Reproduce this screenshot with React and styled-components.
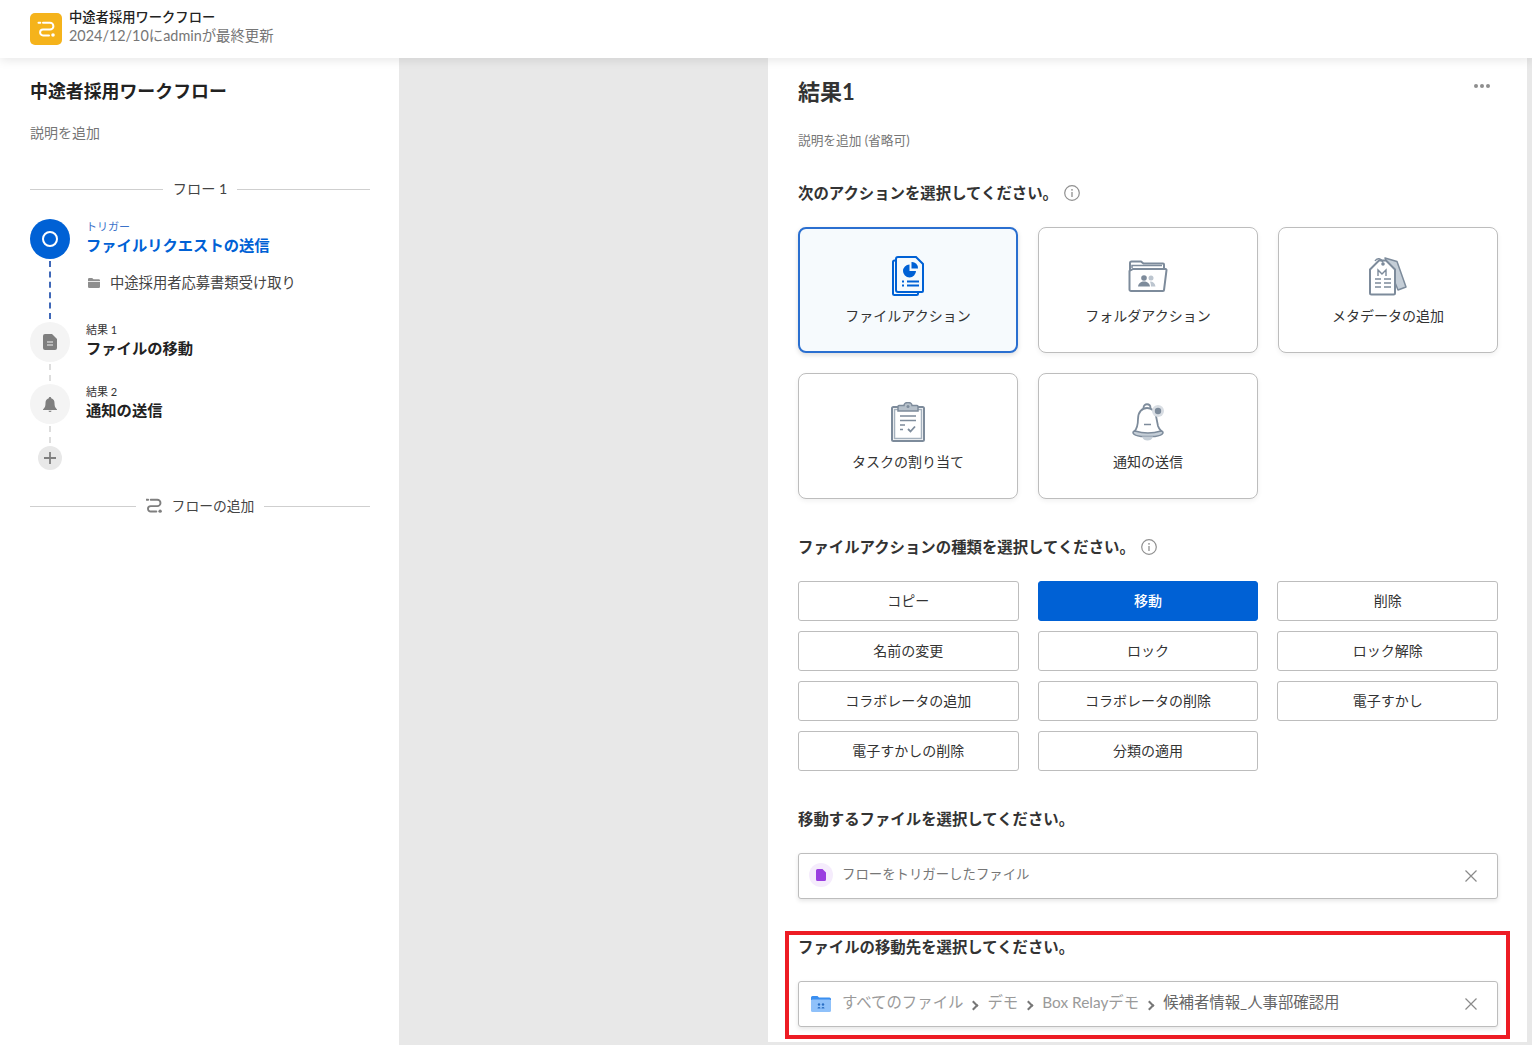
import styled, { createGlobalStyle } from "styled-components";

const GlobalStyle = createGlobalStyle`
    * { box-sizing: border-box; }
    html, body { margin: 0; padding: 0; height: 100%; }
    body {
        font-family: "Lato", "Noto Sans CJK JP", sans-serif;
        color: #222222;
        background: #e8e8e8;
        overflow: hidden;
    }
`;

const GRAY = "#7d8b9b";

function RelayIcon({ color = "#ffffff", size = 32, box = "0 0 32 32" }) {
    return (
        <svg width={size} height={size} viewBox={box} fill="none">
            <path d="M8.500 9.800h1.800M13 9.800h7a3.400 3.400 0 0 1 0 6.800h-7a2.800 2.800 0 0 0 0 5.800h6" stroke={color} strokeWidth="2" strokeLinecap="round" />
            <circle cx="23" cy="22" r="1.800" fill={color} />
        </svg>
    );
}

function FileActionIcon() {
    return (
        <svg width="32" height="40" viewBox="0 0 32 40" fill="none">
            <path d="M3 4.500H2.500A1.500 1.500 0 0 0 1 6v31.500A1.500 1.500 0 0 0 2.500 39h22a1.500 1.500 0 0 0 1.500-1.500V37" stroke="#0061d5" strokeWidth="2" />
            <path d="M6 1h18l7 7v27a1 1 0 0 1-1 1H6a2 2 0 0 1-2-2V3a2 2 0 0 1 2-2z" fill="#f6fafd" stroke="#0061d5" strokeWidth="2" />
            <path d="M17.500 8.500a6.500 6.500 0 1 0 6.500 6.500h-6.500z" fill="#0061d5" />
            <path d="M19.500 6a6 6 0 0 1 6.500 6.500h-6.500z" fill="#0061d5" />
            <path d="M10 25.500h2M15 25.500h12M10 29.500h2M15 29.500h12" stroke="#0061d5" strokeWidth="1.800" />
        </svg>
    );
}

function FolderActionIcon() {
    return (
        <svg width="40" height="32" viewBox="0 0 40 32" fill="none">
            <path d="M2 28V3a1.500 1.500 0 0 1 1.500-1.500H13l2.500 2H35a1 1 0 0 1 1 1V8" stroke={GRAY} strokeWidth="2" />
            <path d="M4 8V5.500h30" stroke={GRAY} strokeWidth="1.500" />
            <path d="M5 9h32.500a1 1 0 0 1 1 1.200L36 30a1 1 0 0 1-1 1H3a1.500 1.500 0 0 1-1.500-1.500V11z" fill="#ffffff" stroke={GRAY} strokeWidth="2" />
            <circle cx="16" cy="18" r="2.800" fill={GRAY} />
            <path d="M10 26.500c.5-3.500 3-5 6-5s5.500 1.500 6 5z" fill={GRAY} />
            <circle cx="23" cy="18" r="2.500" fill="#bcc5cf" />
            <path d="M22 21.500c3 0 5 1.500 5.500 5H23c0-2-.5-3.500-1-5z" fill="#bcc5cf" />
        </svg>
    );
}

function MetadataIcon() {
    return (
        <svg width="38" height="40" viewBox="0 0 38 40" fill="none">
            <path d="M16 2l12 3.500L37 31l-8 3z" fill="#c5ced7" stroke={GRAY} strokeWidth="1.500" strokeLinejoin="round" />
            <path d="M1 13.500L10 4.500h7l9 9V37a1.500 1.500 0 0 1-1.500 1.500h-22A1.500 1.500 0 0 1 1 37z" fill="#ffffff" stroke={GRAY} strokeWidth="2" strokeLinejoin="round" />
            <path d="M6 5c2-3.500 6-3 8 1.500" stroke={GRAY} strokeWidth="1.500" />
            <circle cx="14" cy="8" r="1.800" fill={GRAY} />
            <path d="M9 20v-6l4 4 4-4v6" stroke={GRAY} strokeWidth="1.400" />
            <path d="M6 23h6M15 23h7M6 27h6M15 27h7M6 31h6M15 31h7" stroke={GRAY} strokeWidth="1.500" />
        </svg>
    );
}

function TaskIcon() {
    return (
        <svg width="34" height="40" viewBox="0 0 34 40" fill="none">
            <rect x="1" y="5" width="32" height="34" rx="1.500" fill="#ffffff" stroke={GRAY} strokeWidth="2" />
            <rect x="3.500" y="7.500" width="27" height="29" fill="#ffffff" stroke="#a5b1bd" strokeWidth="1.500" />
            <path d="M8 3.500h5a4 3 0 0 1 8 0h5a1 1 0 0 1 1 1V9H7V4.500a1 1 0 0 1 1-1z" fill="#b6c0ca" stroke={GRAY} strokeWidth="1.500" />
            <circle cx="17" cy="4.500" r="1.500" fill={GRAY} />
            <path d="M9 14h16M9 18.500h16M9 23h5M9 27.500h3" stroke={GRAY} strokeWidth="1.500" />
            <path d="M17 27l2.500 2.500 4.500-5" stroke={GRAY} strokeWidth="1.800" />
        </svg>
    );
}

function NotifyIcon() {
    return (
        <svg width="34" height="38" viewBox="0 0 34 38" fill="none">
            <path d="M3 29c3-3 4-7 4-13 0-7 4-11 9-11s8 4 9 8l2 10c.5 2 2 4 4 6" stroke={GRAY} strokeWidth="1.800" />
            <path d="M12.500 5c0-5 7-5 7 0" stroke={GRAY} strokeWidth="1.800" />
            <path d="M2 30c0-1.500 1-2 2-2 8 2.500 18 2.500 26 0 1 0 2 .5 2 2-1 2-4 3-8 3.500H10C6 33 3 32 2 30z" fill="#c5ced7" stroke={GRAY} strokeWidth="1.500" />
            <path d="M11 33.500c1 3 3 4 5.500 4s4.500-1 5.500-4z" fill="#c5ced7" />
            <path d="M13 21.500h7" stroke={GRAY} strokeWidth="1.500" />
            <circle cx="27" cy="8" r="6" fill="#d8dde3" />
            <circle cx="27" cy="8" r="3.200" fill={GRAY} />
        </svg>
    );
}

function InfoIcon() {
    return (
        <svg width="16" height="16" viewBox="0 0 16 16" fill="none">
            <circle cx="8" cy="8" r="7.300" stroke="#909090" strokeWidth="1.200" />
            <circle cx="8" cy="4.800" r="0.900" fill="#909090" />
            <path d="M8 7v5" stroke="#909090" strokeWidth="1.300" />
        </svg>
    );
}

function CloseIcon() {
    return (
        <svg width="14" height="14" viewBox="0 0 14 14" fill="none">
            <path d="M1.500 1.500l11 11M12.500 1.500l-11 11" stroke="#8a8a8a" strokeWidth="1.200" />
        </svg>
    );
}

const acoes = [
    { label: "ファイルアクション", icon: <FileActionIcon />, selecionado: true },
    { label: "フォルダアクション", icon: <FolderActionIcon /> },
    { label: "メタデータの追加", icon: <MetadataIcon /> },
    { label: "タスクの割り当て", icon: <TaskIcon /> },
    { label: "通知の送信", icon: <NotifyIcon /> },
];

const tipos = [
    "コピー", "移動", "削除",
    "名前の変更", "ロック", "ロック解除",
    "コラボレータの追加", "コラボレータの削除", "電子すかし",
    "電子すかしの削除", "分類の適用",
];

export default function App() {
    return (
        <>
            <GlobalStyle />
            <Page>
                <Header>
                    <LogoBox><RelayIcon /></LogoBox>
                    <HeaderText>
                        <strong>中途者採用ワークフロー</strong>
                        <span>2024/12/10にadminが最終更新</span>
                    </HeaderText>
                </Header>
                <Main>
                    <LeftPanel>
                        <FlowTitle>中途者採用ワークフロー</FlowTitle>
                        <FlowDesc>説明を追加</FlowDesc>
                        <Divider>フロー 1</Divider>
                        <Steps>
                            <Step $h={103}>
                                <Rail>
                                    <Circle $active>
                                        <Ring />
                                    </Circle>
                                    <Connector $active />
                                </Rail>
                                <StepBody>
                                    <StepLabel $active>トリガー</StepLabel>
                                    <StepName $active>ファイルリクエストの送信</StepName>
                                    <StepFolder>
                                        <svg width="12" height="10" viewBox="0 0 12 10">
                                            <path d="M0 1.200A1.200 1.200 0 0 1 1.200 0h3l1.300 1.300h5.300A1.200 1.200 0 0 1 12 2.500v6.300A1.200 1.200 0 0 1 10.800 10H1.200A1.200 1.200 0 0 1 0 8.800z" fill="#8e8e8e" />
                                            <path d="M0 3h12v.8H0z" fill="#ffffff" />
                                        </svg>
                                        中途採用者応募書類受け取り
                                    </StepFolder>
                                </StepBody>
                            </Step>
                            <Step $h={62}>
                                <Rail>
                                    <Circle>
                                        <svg width="14" height="16" viewBox="0 0 14 16">
                                            <path d="M2 0h7l5 5v9a2 2 0 0 1-2 2H2a2 2 0 0 1-2-2V2a2 2 0 0 1 2-2z" fill="#7f7f7f" />
                                            <path d="M4 8h6M4 11h6" stroke="#f3f3f3" strokeWidth="1.200" />
                                        </svg>
                                    </Circle>
                                    <Connector />
                                </Rail>
                                <StepBody>
                                    <StepLabel>結果 1</StepLabel>
                                    <StepName>ファイルの移動</StepName>
                                </StepBody>
                            </Step>
                            <Step $h={62}>
                                <Rail>
                                    <Circle>
                                        <svg width="14" height="15" viewBox="0 0 14 15">
                                            <path d="M7 0c.8 0 1.200.5 1.200 1.200C10.500 1.800 11.500 3.500 11.500 6c0 3 .5 4.500 2.500 6.500V13H0v-.5C2 10.500 2.500 9 2.500 6c0-2.500 1-4.200 3.300-4.800C5.800.5 6.200 0 7 0z" fill="#7f7f7f" />
                                            <path d="M5.500 13.800h3a1.500 1.200 0 0 1-3 0z" fill="#7f7f7f" />
                                        </svg>
                                    </Circle>
                                    <Connector />
                                </Rail>
                                <StepBody>
                                    <StepLabel>結果 2</StepLabel>
                                    <StepName>通知の送信</StepName>
                                </StepBody>
                            </Step>
                            <Rail>
                                <AddCircle>
                                    <svg width="14" height="14" viewBox="0 0 14 14">
                                        <path d="M7 1v12M1 7h12" stroke="#7f7f7f" strokeWidth="1.800" />
                                    </svg>
                                </AddCircle>
                            </Rail>
                        </Steps>
                        <Divider $add>
                            <RelayIcon color="#7f7f7f" size={16} box="8 8 17 17" />
                            <span>フローの追加</span>
                        </Divider>
                    </LeftPanel>
                    <Canvas />
                    <RightPanel>
                        <TitleRow>
                            <h1>結果1</h1>
                            <Dots><i /><i /><i /></Dots>
                        </TitleRow>
                        <ResultDesc>説明を追加 (省略可)</ResultDesc>
                        <SectionTitle $first>
                            次のアクションを選択してください。
                            <InfoIcon />
                        </SectionTitle>
                        <Cards>
                            {acoes.map(acao => (
                                <Card key={acao.label} $selecionado={acao.selecionado}>
                                    <CardIcon>{acao.icon}</CardIcon>
                                    {acao.label}
                                </Card>
                            ))}
                        </Cards>
                        <SectionTitle>
                            ファイルアクションの種類を選択してください。
                            <InfoIcon />
                        </SectionTitle>
                        <Tipos>
                            {tipos.map(tipo => (
                                <Tipo key={tipo} $selecionado={tipo === "移動"}>{tipo}</Tipo>
                            ))}
                        </Tipos>
                        <SectionTitle>移動するファイルを選択してください。</SectionTitle>
                        <Field>
                            <FileBadge>
                                <svg width="10" height="12" viewBox="0 0 10 12">
                                    <path d="M1.500 0h5L10 3.500V10.500A1.500 1.500 0 0 1 8.500 12h-7A1.500 1.500 0 0 1 0 10.500v-9A1.500 1.500 0 0 1 1.500 0z" fill="#9a3fe0" />
                                </svg>
                            </FileBadge>
                            <FieldText>フローをトリガーしたファイル</FieldText>
                            <CloseIcon />
                        </Field>
                        <SectionTitle>ファイルの移動先を選択してください。</SectionTitle>
                        <Field>
                            <FolderBadge>
                                <svg width="20" height="16" viewBox="0 0 20 16">
                                    <path d="M0 1.500A1.500 1.500 0 0 1 1.500 0h5l1.500 1.500h10.500A1.500 1.500 0 0 1 20 3v1.500H0z" fill="#3b8ff0" />
                                    <rect y="3.500" width="20" height="12.500" rx="1.500" fill="#8fc1fa" />
                                    <circle cx="8" cy="8.500" r="1.200" fill="#2a6fc4" />
                                    <circle cx="12" cy="8.500" r="1.200" fill="#2a6fc4" />
                                    <path d="M6.500 12.500c0-2 3-2 3 0zM10.500 12.500c0-2 3-2 3 0z" fill="#2a6fc4" />
                                </svg>
                            </FolderBadge>
                            <Crumbs>
                                <Crumb>すべてのファイル</Crumb>
                                <CrumbArrow />
                                <Crumb>デモ</Crumb>
                                <CrumbArrow />
                                <Crumb>Box Relayデモ</Crumb>
                                <CrumbArrow />
                                <Crumb $atual>候補者情報_人事部確認用</Crumb>
                            </Crumbs>
                            <CloseIcon />
                        </Field>
                        <RedBox />
                    </RightPanel>
                </Main>
            </Page>
        </>
    );
}

const Page = styled.div`
    width: 1532px;
    height: 1045px;
    display: flex;
    flex-direction: column;
    overflow: hidden;
`;

const Header = styled.header`
    position: relative;
    z-index: 2;
    flex: 0 0 58px;
    display: flex;
    align-items: center;
    gap: 7px;
    padding-left: 30px;
    background: #ffffff;
    box-shadow: 0 2px 10px rgba(0, 0, 0, 0.1);
`;

const LogoBox = styled.div`
    width: 32px;
    height: 32px;
    margin-top: -1px;
    border-radius: 5px;
    background: #f5b31b;
    display: flex;
`;

const HeaderText = styled.div`
    display: flex;
    flex-direction: column;
    margin-top: -5px;
    strong {
        font-size: 13.3px;
        line-height: 18px;
        font-weight: 500;
        color: #222222;
    }
    span {
        font-size: 14.4px;
        line-height: 20px;
        color: #767676;
    }
`;

const Main = styled.main`
    flex: 1;
    display: flex;
    min-height: 0;
`;

const LeftPanel = styled.aside`
    width: 399px;
    background: #ffffff;
    padding: 20px 29px 0 30px;
`;

const FlowTitle = styled.h2`
    margin: 0;
    font-size: 17.9px;
    line-height: 26px;
    font-weight: 700;
    color: #222222;
`;

const FlowDesc = styled.p`
    margin: 19px 0 0;
    font-size: 14px;
    line-height: 20px;
    color: #767676;
`;

const Divider = styled.div`
    margin-top: ${props => props.$add ? "26px" : "36px"};
    display: flex;
    align-items: center;
    gap: 10px;
    font-size: ${props => props.$add ? "13.8px" : "14.2px"};
    line-height: 20px;
    color: #444444;
    &::before, &::after {
        content: "";
        flex: 1;
        height: 1px;
        background: #cfcfcf;
    }
`;

const Steps = styled.div`
    margin-top: 20px;
    display: flex;
    flex-direction: column;
`;

const Step = styled.div`
    height: ${props => props.$h}px;
    display: flex;
    gap: 16px;
`;

const Rail = styled.div`
    width: 40px;
    display: flex;
    flex-direction: column;
    align-items: center;
`;

const Circle = styled.div`
    flex: 0 0 40px;
    width: 40px;
    border-radius: 50%;
    display: flex;
    align-items: center;
    justify-content: center;
    background: ${props => props.$active ? "#0061d5" : "#f4f4f4"};
`;

const Ring = styled.span`
    width: 16px;
    height: 16px;
    border-radius: 50%;
    border: 2px solid #ffffff;
`;

const AddCircle = styled.div`
    width: 24px;
    height: 24px;
    border-radius: 50%;
    background: #e8e8e8;
    display: flex;
    align-items: center;
    justify-content: center;
`;

const Connector = styled.div`
    flex: 1;
    width: 0;
    margin: 2px 0 3px;
    border-left: 2px dashed ${props => props.$active ? "#3f68b8" : "#dddddd"};
`;

const StepBody = styled.div`
    display: flex;
    flex-direction: column;
    padding-top: 1px;
`;

const StepLabel = styled.div`
    font-size: 11px;
    line-height: 12px;
    margin-top: 1px;
    color: ${props => props.$active ? "#3b72c9" : "#333333"};
`;

const StepName = styled.div`
    margin-top: 1px;
    font-size: 15.3px;
    line-height: 22px;
    font-weight: 700;
    color: ${props => props.$active ? "#0061d5" : "#222222"};
`;

const StepFolder = styled.div`
    margin-top: 17px;
    margin-left: 2px;
    display: flex;
    align-items: center;
    gap: 10px;
    font-size: 14.3px;
    line-height: 20px;
    color: #444444;
`;

const Canvas = styled.div`
    width: 369px;
    background: #e8e8e8;
`;

const RightPanel = styled.section`
    position: relative;
    width: 759px;
    height: 984px;
    background: #ffffff;
    padding: 20px 29px 0 30px;
`;

const TitleRow = styled.div`
    display: flex;
    justify-content: space-between;
    h1 {
        margin: 0;
        font-size: 22px;
        line-height: 28px;
        font-weight: 700;
        color: #333333;
    }
`;

const Dots = styled.div`
    display: flex;
    gap: 2px;
    margin: 6px 8px 0 0;
    i {
        width: 4px;
        height: 4px;
        border-radius: 50%;
        background: #8e8e8e;
    }
`;

const ResultDesc = styled.p`
    margin: 24px 0 0;
    padding-top: 1px;
    height: 18px;
    font-size: 12.7px;
    line-height: 18px;
    color: #767676;
`;

const SectionTitle = styled.h3`
    margin: ${props => props.$first ? "35px" : "38px"} 0 24px;
    display: flex;
    align-items: center;
    gap: 6px;
    font-size: 15.4px;
    line-height: 20px;
    font-weight: 700;
    color: #333333;
`;

const Cards = styled.div`
    display: grid;
    grid-template-columns: repeat(3, 220px);
    grid-auto-rows: 126px;
    gap: 20px;
`;

const Card = styled.div`
    display: flex;
    flex-direction: column;
    align-items: center;
    padding-top: ${props => props.$selecionado ? "26px" : "27px"};
    border-radius: 8px;
    border: ${props => props.$selecionado ? "2px solid #2a6fd0" : "1px solid #bdbdbd"};
    background: ${props => props.$selecionado ? "#f6fafd" : "#ffffff"};
    box-shadow: 0 2px 5px rgba(0, 0, 0, ${props => props.$selecionado ? "0.14" : "0.06"});
    font-size: 14px;
    line-height: 20px;
    color: #333333;
`;

const CardIcon = styled.div`
    height: 42px;
    margin-bottom: 9px;
    display: flex;
    align-items: center;
    justify-content: center;
`;

const Tipos = styled.div`
    display: grid;
    grid-template-columns: repeat(3, 1fr);
    grid-auto-rows: 40px;
    gap: 10px 19px;
`;

const Tipo = styled.div`
    display: flex;
    align-items: center;
    justify-content: center;
    padding-bottom: 3px;
    border-radius: 3px;
    border: 1px solid ${props => props.$selecionado ? "#0061d5" : "#bdbdbd"};
    background: ${props => props.$selecionado ? "#0061d5" : "#ffffff"};
    color: ${props => props.$selecionado ? "#ffffff" : "#333333"};
    font-size: 14px;
    font-weight: ${props => props.$selecionado ? 500 : 400};
`;

const Field = styled.div`
    height: 46px;
    display: flex;
    align-items: center;
    padding: 0 19px 0 10px;
    border: 1px solid #bdbdbd;
    border-radius: 3px;
    background: #ffffff;
    box-shadow: 0 2px 4px rgba(0, 0, 0, 0.1);
`;

const FileBadge = styled.div`
    flex: 0 0 24px;
    height: 24px;
    margin-top: -2px;
    border-radius: 50%;
    background: #f5ecfc;
    display: flex;
    align-items: center;
    justify-content: center;
    margin-right: 9px;
`;

const FolderBadge = styled.div`
    flex: 0 0 20px;
    height: 16px;
    display: flex;
    margin: 0 11px 0 2px;
`;

const FieldText = styled.span`
    flex: 1;
    padding-bottom: 7px;
    font-size: 13.4px;
    color: #767676;
`;

const Crumbs = styled.div`
    flex: 1;
    display: flex;
    align-items: center;
    gap: 8px;
    padding-bottom: 7px;
`;

const Crumb = styled.span`
    font-size: 15.4px;
    color: ${props => props.$atual ? "#666666" : "#9a9a9a"};
`;

const CrumbArrow = styled.i`
    width: 7px;
    height: 7px;
    margin: 10px 2px 0 -1px;
    border-top: 2px solid #777777;
    border-right: 2px solid #777777;
    transform: rotate(45deg);
`;

const RedBox = styled.div`
    position: absolute;
    left: 17px;
    top: 873px;
    width: 725px;
    height: 108px;
    border: 4px solid #ed1c24;
    pointer-events: none;
`;
